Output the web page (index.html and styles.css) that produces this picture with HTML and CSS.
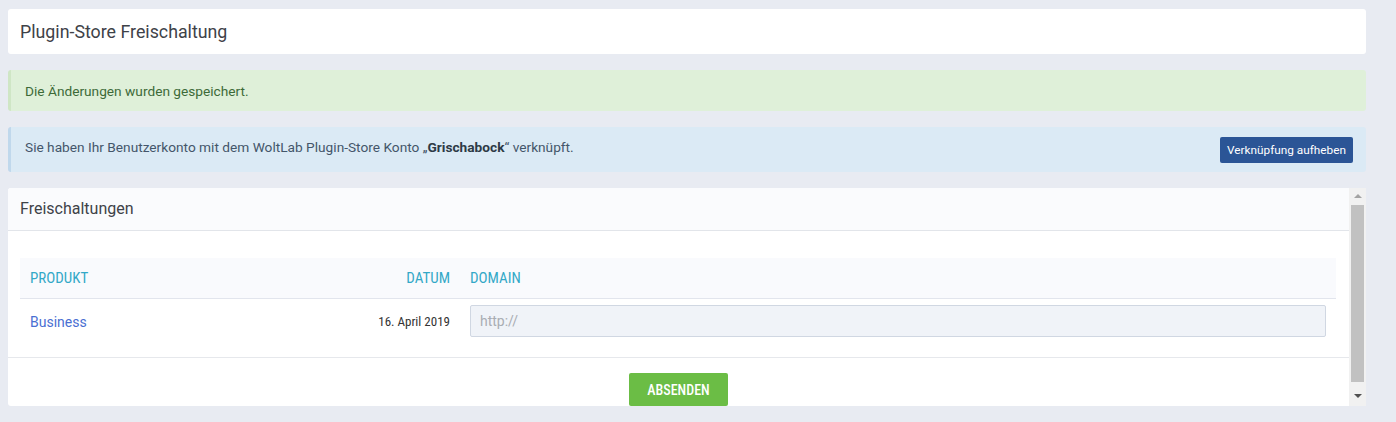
FILE: index.html
```html
<!DOCTYPE html>
<html lang="de">
<head>
<meta charset="utf-8">
<title>Plugin-Store Freischaltung</title>
<link rel="stylesheet" href="styles.css">
</head>
<body>
<div class="page">
  <header class="page-header">
    <h1 class="page-title">Plugin-Store Freischaltung</h1>
  </header>

  <p class="notice success">Die Änderungen wurden gespeichert.</p>

  <div class="notice info">
    <p class="info-text">Sie haben Ihr Benutzerkonto mit dem WoltLab Plugin-Store Konto „<strong>Grischabock</strong>“ verknüpft.</p>
    <button class="btn-primary" type="button">Verknüpfung aufheben</button>
  </div>

  <section class="panel">
    <div class="panel-main">
      <h2 class="panel-title">Freischaltungen</h2>
      <div class="panel-body">
        <div class="grid-table">
          <div class="row head">
            <div class="cell">Produkt</div>
            <div class="cell right">Datum</div>
            <div class="cell">Domain</div>
          </div>
          <div class="row data">
            <div class="cell"><a class="link" href="#">Business</a></div>
            <div class="cell right date">16. April 2019</div>
            <div class="cell"><input class="field" type="text" placeholder="http://"></div>
          </div>
        </div>
      </div>
      <div class="panel-footer">
        <button class="btn-submit" type="button">Absenden</button>
      </div>
    </div>
    <div class="scrollbar">
      <span class="arrow up"></span>
      <span class="thumb"></span>
      <span class="arrow down"></span>
    </div>
  </section>
</div>
</body>
</html>
```
FILE: styles.css
```css
* { box-sizing: border-box; }

html, body {
  margin: 0;
  padding: 0;
  background: #e8ebf2;
  font-family: Roboto, "Liberation Sans", Arial, sans-serif;
  color: #3a3a3a;
}

.page {
  padding: 9px 30px 0 8px;
  display: flex;
  flex-direction: column;
  gap: 16px;
}

.page-header {
  background: #fff;
  border-radius: 3px;
  height: 45px;
  padding: 0 12px;
  display: flex;
  align-items: center;
}

.page-title {
  margin: 0 0 1px;
  font-size: 17.8px;
  font-weight: 400;
  color: #3e4248;
}

.notice {
  margin: 0;
  border-radius: 3px;
  border-left: 3px solid;
  font-size: 13.7px;
}

.success {
  background: #dff0d9;
  border-left-color: #cfe6c5;
  color: #3d6a38;
  height: 41px;
  padding: 0 14px;
  display: flex;
  align-items: center;
}

.info {
  background: #dbeaf5;
  border-left-color: #c0d8ec;
  color: #44566a;
  height: 45px;
  padding: 10px 13px 0 14px;
  display: flex;
  align-items: flex-start;
  justify-content: space-between;
}

.info-text {
  margin: 2px 0 0;
}

.info-text strong {
  color: #2d3a46;
  font-weight: 700;
}

.btn-primary {
  border: 0;
  border-radius: 2px;
  background: #2b5596;
  color: #fff;
  font-family: inherit;
  font-size: 11.8px;
  height: 26px;
  padding: 0 7px;
}

.panel {
  display: flex;
  height: 218px;
  overflow: hidden;
  border-radius: 3px 0 0 3px;
}

.panel-main {
  flex: 1;
  background: #fff;
  display: flex;
  flex-direction: column;
}

.panel-title {
  margin: 0;
  height: 43px;
  background: #fafbfd;
  border-bottom: 1px solid #e2e5ea;
  font-size: 16px;
  font-weight: 400;
  color: #3e4248;
  padding: 0 12px 1px;
  display: flex;
  align-items: center;
}

.panel-body {
  padding: 27px 13px 14px 12px;
  border-bottom: 1px solid #e6e8ec;
}

.row {
  display: grid;
  grid-template-columns: 340px 100px 1fr;
  align-items: center;
}

.row.head {
  height: 41px;
  background: #f9fafd;
  border-bottom: 1px solid #e2e5ed;
  color: #33a8c7;
  text-transform: uppercase;
  font-size: 15px;
  font-stretch: 80%;
  font-weight: 380;
}

.row.data {
  height: 44px;
}

.cell {
  padding: 0 10px;
}

.right { text-align: right; }

.date {
  font-size: 13px;
  font-stretch: 87%;
  font-weight: 400;
  color: #333;
}

.link {
  color: #4a6fd2;
  text-decoration: none;
  font-size: 14px;
}

.field {
  display: block;
  width: 100%;
  height: 32px;
  background: #f0f3f8;
  border: 1px solid #d0d7e2;
  border-radius: 2px;
  padding: 0 9px;
  font-family: inherit;
  font-size: 14px;
  color: #333;
}

.field::placeholder { color: #a9adb3; }

.panel-footer {
  padding-top: 15px;
  display: flex;
  justify-content: center;
}

.btn-submit {
  border: 0;
  border-radius: 2px;
  background: #6bbd45;
  color: #fff;
  font-family: inherit;
  font-size: 14px;
  font-stretch: 80%;
  font-weight: 500;
  text-transform: uppercase;
  width: 99px;
  height: 33px;
  flex: none;
}

.scrollbar {
  width: 17px;
  flex: none;
  background: #f1f1f1;
  display: flex;
  flex-direction: column;
  align-items: center;
}

.arrow {
  width: 0;
  height: 0;
  border-left: 4px solid transparent;
  border-right: 4px solid transparent;
}

.arrow.up {
  margin-top: 6px;
  border-bottom: 4px solid #a3a3a3;
}

.thumb {
  width: 13px;
  height: 177px;
  margin-top: 7px;
  background: #c1c1c1;
}

.arrow.down {
  margin-top: 12px;
  border-top: 4px solid #505050;
}
```
